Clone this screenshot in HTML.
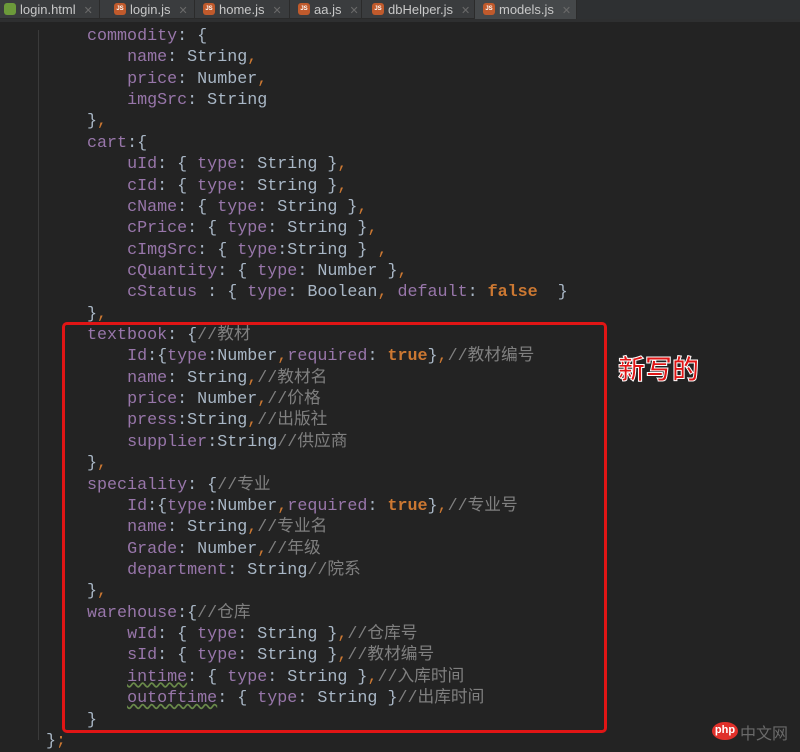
<!DOCTYPE html>
<html><head><meta charset="utf-8"><style>
*{margin:0;padding:0;box-sizing:border-box}
body{width:800px;height:748px;background:#232323;overflow:hidden;position:relative;font-family:"Liberation Mono","Noto Sans CJK SC",monospace}
.tabs{position:absolute;left:0;top:0;width:800px;height:19px;background:#3a3c3e;border-bottom:1px solid #2a2a2a}
.tab{position:absolute;top:0;height:19px;font:13px/19px "Liberation Sans",sans-serif;color:#c8c8c8;border-right:1px solid #2b2b2b;padding-left:4px;white-space:nowrap;overflow:hidden}
.tab .x{color:#6a6a6a;margin-left:8px;font-size:11px}
.ic{display:inline-block;width:12px;height:12px;vertical-align:middle;margin:-3px 4px 0 0;background:#c05a2c;border-radius:3px;font:bold 6px/12px "Liberation Sans",sans-serif;color:#fff;text-align:center}
.ich{background:#6c9a3a}
.sep{position:absolute;top:19px;left:0;width:800px;height:3px;background:#2e2f30}
.rest{position:absolute;left:577px;top:0;width:223px;height:19px;background:#2e3032}
.code{position:absolute;left:0;top:26px;font-size:16.7px;line-height:21.36px;color:#a9b7c6;white-space:pre}
.k{color:#9876aa}.o{color:#cc7832}.c{color:#7f7f7f}.b{color:#cc7832;font-weight:bold}
.u{text-decoration:underline wavy #6a8a4a}
.gut{position:absolute;left:38px;top:30px;width:1px;height:710px;background:#3a3a3a}
.box{position:absolute;left:62px;top:322px;width:545px;height:411px;border:3px solid #e01515;border-radius:5px}
.new{position:absolute;left:618px;top:348px;font:bold 27px "Noto Sans CJK SC",sans-serif;color:#e01515;-webkit-text-stroke:1px #fff}
.php{position:absolute;left:712px;top:722px;width:26px;height:18px;background:#e0302a;border-radius:50%;color:#fff;font:bold 11px "Liberation Sans",sans-serif;text-align:center;line-height:17px}
.zw{position:absolute;left:740px;top:720px;font:16px "Noto Sans CJK SC",sans-serif;color:#6a6a6a}
</style></head><body>
<div class="tabs">
<div class="tab" style="left:0;width:100px"><span class="ic ich"></span>login.html<span class="x">✕</span></div>
<div class="tab" style="left:100px;width:95px;padding-left:14px"><span class="ic">JS</span>login.js<span class="x">✕</span></div>
<div class="tab" style="left:195px;width:95px;padding-left:8px"><span class="ic">JS</span>home.js<span class="x">✕</span></div>
<div class="tab" style="left:290px;width:72px;padding-left:8px"><span class="ic">JS</span>aa.js<span class="x">✕</span></div>
<div class="tab" style="left:362px;width:113px;padding-left:10px"><span class="ic">JS</span>dbHelper.js<span class="x">✕</span></div>
<div class="tab" style="left:475px;width:102px;padding-left:8px;background:#45484a"><span class="ic">JS</span>models.js<span class="x">✕</span></div>
<div class="rest"></div>
</div>
<div class="sep"></div>
<div class="gut"></div>
<div class="code" style="left:87px"><span class="k">commodity</span>: {
    <span class="k">name</span>: String<span class="o">,</span>
    <span class="k">price</span>: Number<span class="o">,</span>
    <span class="k">imgSrc</span>: String
}<span class="o">,</span>
<span class="k">cart</span>:{
    <span class="k">uId</span>: { <span class="k">type</span>: String }<span class="o">,</span>
    <span class="k">cId</span>: { <span class="k">type</span>: String }<span class="o">,</span>
    <span class="k">cName</span>: { <span class="k">type</span>: String }<span class="o">,</span>
    <span class="k">cPrice</span>: { <span class="k">type</span>: String }<span class="o">,</span>
    <span class="k">cImgSrc</span>: { <span class="k">type</span>:String } <span class="o">,</span>
    <span class="k">cQuantity</span>: { <span class="k">type</span>: Number }<span class="o">,</span>
    <span class="k">cStatus</span> : { <span class="k">type</span>: Boolean<span class="o">,</span> <span class="k">default</span>: <span class="b">false</span>  }
}<span class="o">,</span>
<span class="k">textbook</span>: {<span class="c">//教材</span>
    <span class="k">Id</span>:{<span class="k">type</span>:Number<span class="o">,</span><span class="k">required</span>: <span class="b">true</span>}<span class="o">,</span><span class="c">//教材编号</span>
    <span class="k">name</span>: String<span class="o">,</span><span class="c">//教材名</span>
    <span class="k">price</span>: Number<span class="o">,</span><span class="c">//价格</span>
    <span class="k">press</span>:String<span class="o">,</span><span class="c">//出版社</span>
    <span class="k">supplier</span>:String<span class="c">//供应商</span>
}<span class="o">,</span>
<span class="k">speciality</span>: {<span class="c">//专业</span>
    <span class="k">Id</span>:{<span class="k">type</span>:Number<span class="o">,</span><span class="k">required</span>: <span class="b">true</span>}<span class="o">,</span><span class="c">//专业号</span>
    <span class="k">name</span>: String<span class="o">,</span><span class="c">//专业名</span>
    <span class="k">Grade</span>: Number<span class="o">,</span><span class="c">//年级</span>
    <span class="k">department</span>: String<span class="c">//院系</span>
}<span class="o">,</span>
<span class="k">warehouse</span>:{<span class="c">//仓库</span>
    <span class="k">wId</span>: { <span class="k">type</span>: String }<span class="o">,</span><span class="c">//仓库号</span>
    <span class="k">sId</span>: { <span class="k">type</span>: String }<span class="o">,</span><span class="c">//教材编号</span>
    <span class="k u">intime</span>: { <span class="k">type</span>: String }<span class="o">,</span><span class="c">//入库时间</span>
    <span class="k u">outoftime</span>: { <span class="k">type</span>: String }<span class="c">//出库时间</span>
}</div>
<div class="code" style="left:46px;top:731px">}<span class="o">;</span></div>
<div class="box"></div>
<div class="new">新写的</div>
<div class="php">php</div>
<div class="zw">中文网</div>
</body></html>
